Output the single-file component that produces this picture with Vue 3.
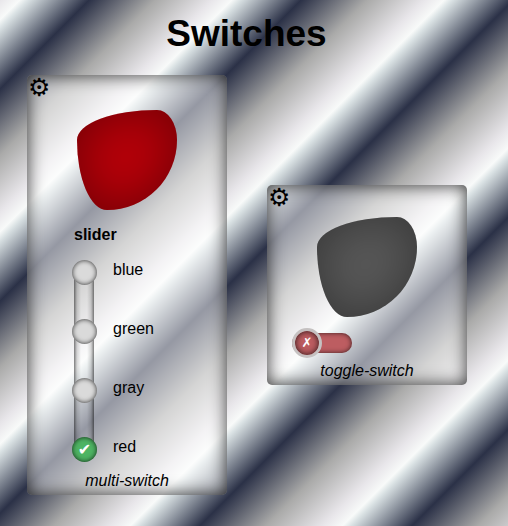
<script setup>
import { ref, computed } from 'vue'

const colors = ['blue', 'green', 'gray', 'red']
const selected = ref('red')
const enabled = ref(false)
const toggleShape = computed(() => (enabled.value ? 'green' : 'gray'))
</script>

<template>
  <main class="page">
    <h1 class="title">Switches</h1>
    <div class="cards">
      <section class="card multi">
        <button class="gear" type="button" aria-label="multi-switch settings">⚙</button>
        <div class="shape" :class="selected"></div>
        <fieldset class="slider">
          <legend class="legend">slider</legend>
          <div class="track">
            <label v-for="c in colors" :key="c" class="option">
              <input v-model="selected" class="knob" type="radio" name="slider" :value="c" />
              <span class="label">{{ c }}</span>
            </label>
          </div>
        </fieldset>
        <em class="name">multi-switch</em>
      </section>

      <section class="card">
        <button class="gear" type="button" aria-label="toggle-switch settings">⚙</button>
        <div class="shape" :class="toggleShape"></div>
        <input id="toggle" v-model="enabled" class="toggle" type="checkbox" role="switch" />
        <label class="name" for="toggle">toggle-switch</label>
      </section>
    </div>
  </main>
</template>

<style>
html {
  min-height: 100%;
  background: repeating-linear-gradient(
    135deg,
    #e8e6ea 0,
    #f8faf9 14px,
    #dae2e4 20px,
    #2b3147 63px,
    #aaaaa9 110px,
    #e8e6ea 150px
  );
}
body {
  margin: 0;
}
</style>

<style scoped>
.page {
  box-sizing: border-box;
  padding: 12px 27px 31px;
  font: 16px/18px "Liberation Sans", Arial, sans-serif;
  color: #000;
}
.title {
  margin: 0 15px 20px 0;
  font-size: 37px;
  line-height: 43px;
  text-align: center;
}
.cards {
  display: flex;
  flex-wrap: wrap;
  align-items: center;
  gap: 40px;
}
.card {
  display: flex;
  flex-direction: column;
  box-sizing: border-box;
  width: 200px;
  padding-bottom: 5px;
  border-radius: 5px;
  background: rgba(255, 255, 255, 0.5);
  box-shadow: inset 0 0 17px rgba(0, 0, 0, 0.8);
}
.gear {
  align-self: flex-start;
  padding: 1px 1px 0;
  border: 0;
  background: none;
  color: #000;
  font: 25px/24px "DejaVu Sans", sans-serif;
  cursor: pointer;
}
.shape {
  width: 100px;
  height: 100px;
  margin: 7px auto 10px;
  border-radius: 80% 20% 70% 30% / 30% 30% 70% 70%;
  box-shadow: inset 0 0 50px rgba(0, 0, 0, 0.4);
}
.multi .shape {
  margin-top: 10px;
}
.shape.red { background: #b80009; }
.shape.gray { background: #595959; }
.shape.green { background: #3fa757; }
.shape.blue { background: #1f4fb8; }
.slider {
  margin: 6px 0 10px 47px;
  padding: 0;
  border: 0;
}
.legend {
  padding: 0;
  font-weight: bold;
}
.track {
  display: flex;
  flex-direction: column;
  gap: 34px;
  margin-top: 16px;
  background: linear-gradient(
    to right,
    rgba(0, 0, 0, 0.5),
    rgba(0, 0, 0, 0.14) 3px,
    rgba(0, 0, 0, 0) 7px,
    rgba(0, 0, 0, 0) 13px,
    rgba(0, 0, 0, 0.14) 17px,
    rgba(0, 0, 0, 0.5)
  ) 0 10px / 20px calc(100% - 20px) no-repeat;
}
.option {
  display: flex;
  gap: 16px;
  margin-left: -2px;
  cursor: pointer;
}
.label {
  padding-top: 1px;
}
.knob {
  appearance: none;
  display: grid;
  place-items: center;
  width: 25px;
  height: 25px;
  margin: 0;
  border-radius: 50%;
  background: #dadada;
  box-shadow: inset 0 0 5px rgba(0, 0, 0, 0.8);
  cursor: pointer;
}
.knob:checked {
  background: #4eb463;
}
.knob:checked::before {
  content: "✔";
  color: #fff;
  font: 16px/16px "DejaVu Sans", sans-serif;
}
.toggle {
  appearance: none;
  display: flex;
  align-items: center;
  width: 60px;
  height: 20px;
  margin: 6px 0 9px 25px;
  border-radius: 10px;
  background: #bd5d61;
  box-shadow: inset 0 0 5px rgba(0, 0, 0, 0.7);
  cursor: pointer;
}
.toggle::before {
  content: "✗";
  flex: none;
  box-sizing: border-box;
  width: 30px;
  height: 30px;
  border: 3px solid #c5c1c1;
  border-radius: 50%;
  background: #bd5d61;
  box-shadow: inset 0 0 6px rgba(0, 0, 0, 0.8);
  color: #fff;
  font: 13px/24px "DejaVu Sans", sans-serif;
  text-align: center;
}
.toggle:checked {
  justify-content: flex-end;
  background: #4eb463;
}
.toggle:checked::before {
  content: "✔";
  background: #4eb463;
}
.name {
  align-self: center;
  font-style: italic;
}
</style>
